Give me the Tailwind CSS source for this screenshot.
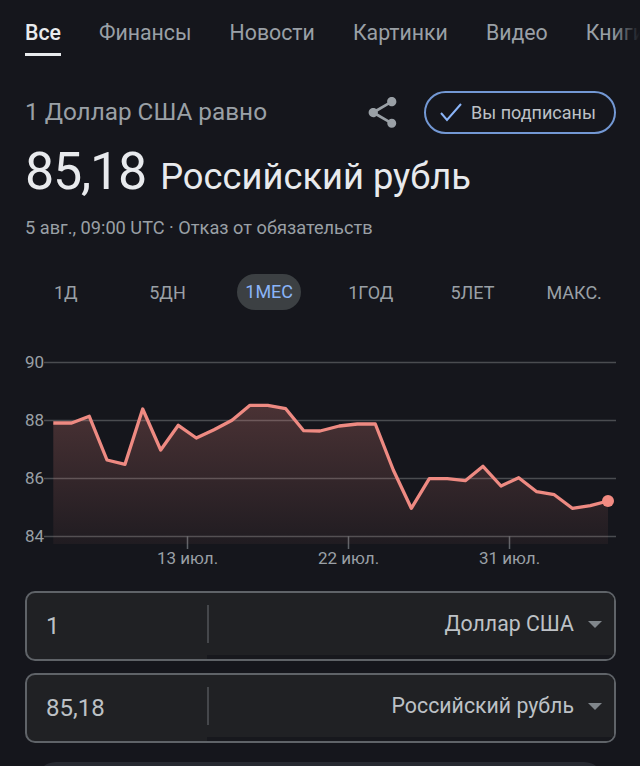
<!DOCTYPE html>
<html lang="ru">
<head>
  <meta charset="UTF-8" />
  <title>Доллар США к рублю</title>
  <script src="https://cdn.jsdelivr.net/npm/@tailwindcss/browser@4"></script>
</head>
<body class="bg-[#15161c] font-['Roboto',sans-serif] w-[640px] h-[766px] overflow-hidden">
  <!-- tabs -->
  <nav class="relative flex gap-[38px] pl-[25px] pt-[20px] h-[57px] text-[21.3px] leading-[26px] whitespace-nowrap overflow-hidden text-[#9aa0a6]">
    <a class="h-[36px] border-b-[3px] border-[#e8eaed] text-[#e8eaed] font-medium">Все</a>
    <a>Финансы</a>
    <a>Новости</a>
    <a>Картинки</a>
    <a>Видео</a>
    <a>Книги</a>
    <div class="absolute right-0 top-0 w-[28px] h-full bg-linear-to-l from-[#15161c] to-transparent"></div>
  </nav>

  <!-- header -->
  <div class="flex items-center pl-[25px] pr-[24px] pt-[24px] h-[86px]">
    <div class="flex-1 text-[24.3px] leading-[32px] text-[#9aa0a6]">1 Доллар США равно</div>
    <svg class="w-[37px] h-[37px] mr-[23px] text-[#9aa0a6]" viewBox="0 0 24 24" fill="currentColor"><path d="M18 16.08c-.76 0-1.44.3-1.96.77L8.91 12.7c.05-.23.09-.46.09-.7s-.04-.47-.09-.7l7.05-4.11c.54.5 1.25.81 2.04.81 1.66 0 3-1.34 3-3s-1.34-3-3-3-3 1.34-3 3c0 .24.04.47.09.7L8.04 9.81C7.5 9.31 6.79 9 6 9c-1.66 0-3 1.34-3 3s1.34 3 3 3c.79 0 1.5-.31 2.04-.81l7.12 4.16c-.05.21-.08.43-.08.65 0 1.61 1.31 2.92 2.92 2.92s2.92-1.31 2.92-2.92-1.31-2.92-2.92-2.92z"/></svg>
    <div class="flex items-center w-[192px] h-[43px] rounded-full border-2 border-[#7398d4] pl-[14px] text-[#bdc1c6] text-[18px]">
      <svg class="w-[22px] h-[22px] mr-[9px] text-[#8ab4f8]" viewBox="0 0 22 22" fill="none" stroke="currentColor" stroke-width="2"><path d="M1 12L7 19L21 3"/></svg>
      Вы подписаны
    </div>
  </div>

  <!-- rate -->
  <div class="flex items-baseline pl-[25px] h-[57px] text-[#e8eaed]">
    <span class="text-[52px] leading-[57px] tracking-[-1.2px]">85,18</span>
    <span class="text-[36.3px] ml-[14px]">Российский рубль</span>
  </div>
  <div class="pl-[25px] pt-[16px] h-[44px] text-[18.2px] leading-[24px] text-[#9aa0a6]">5 авг., 09:00 UTC · Отказ от обязательств</div>

  <!-- ranges -->
  <div class="grid grid-cols-6 w-[610px] ml-[15px] h-[36px] mt-[30px] items-center text-center text-[18px] text-[#9aa0a6]">
    <span>1Д</span>
    <span>5ДН</span>
    <span class="justify-self-center w-[64px] h-[36px] leading-[36px] rounded-full bg-[#3c4043] text-[#8ab4f8]">1МЕС</span>
    <span>1ГОД</span>
    <span>5ЛЕТ</span>
    <span>МАКС.</span>
  </div>

  <!-- chart -->
  <svg class="block mt-[34px] w-[640px] h-[250px] font-['Roboto',sans-serif]" viewBox="0 344 640 250">
    <defs>
      <linearGradient id="area" x1="0" y1="405" x2="0" y2="544" gradientUnits="userSpaceOnUse">
        <stop offset="0" stop-color="#f28b82" stop-opacity=".24" />
        <stop offset="1" stop-color="#f28b82" stop-opacity=".05" />
      </linearGradient>
    </defs>
    <g stroke="#4a4c50" stroke-width="1.5">
      <path d="M44 362.5H616M44 420.5H616M44 478.5H616M44 536.5H616" />
      <path stroke="#5f6368" d="M187.5 536V549M348.5 536V549M509.5 536V549" />
    </g>
    <path fill="url(#area)" d="M53.3 423L71.7 423L89.3 416.3L107 460L125 464.3L142.7 409L160.7 450L178.3 425.3L196.3 438L214 429.7L232 420.3L250 405.3L267.7 405.3L285.7 408.7L303.7 430.7L320 431L339.3 426L357.3 424L375.3 424L393.3 470L411.3 508.3L429.3 478.7L447.3 478.7L465.3 480.7L483 466.3L501 486L518.7 477.7L536.7 491.7L554.3 494.7L572.3 508.3L590.3 505.7L608 501V544H53.3Z" />
    <path fill="none" stroke="#ee8a82" stroke-width="3.3" stroke-linejoin="round" d="M53.3 423L71.7 423L89.3 416.3L107 460L125 464.3L142.7 409L160.7 450L178.3 425.3L196.3 438L214 429.7L232 420.3L250 405.3L267.7 405.3L285.7 408.7L303.7 430.7L320 431L339.3 426L357.3 424L375.3 424L393.3 470L411.3 508.3L429.3 478.7L447.3 478.7L465.3 480.7L483 466.3L501 486L518.7 477.7L536.7 491.7L554.3 494.7L572.3 508.3L590.3 505.7L608 501" />
    <circle cx="608" cy="501" r="6" fill="#f28b82" />
    <g fill="#9aa0a6" font-size="17">
      <text x="25" y="368">90</text>
      <text x="25" y="426">88</text>
      <text x="25" y="484">86</text>
      <text x="25" y="542">84</text>
      <text x="187.5" y="564" text-anchor="middle">13 июл.</text>
      <text x="348.5" y="564" text-anchor="middle">22 июл.</text>
      <text x="509.5" y="564" text-anchor="middle">31 июл.</text>
    </g>
  </svg>

  <!-- converter -->
  <div class="flex flex-col gap-[12px] ml-[25px] w-[591px] mt-[-3px]">
    <div class="flex h-[70px] rounded-[10px] border-2 border-[#5f6368] bg-[#202124] overflow-hidden">
      <div class="flex items-center w-[180px] pl-[19px] text-[24px] text-[#bdc1c6]">1</div>
      <div class="flex flex-1 items-center justify-end h-[62px] pr-[12px] bg-[#202124] shadow-[0_4px_0_#17181d]">
        <div class="w-[2px] h-[38px] bg-[#45474b] mr-auto"></div>
        <span class="text-[21.3px] text-[#bdc1c6] mr-[14px]">Доллар США</span>
        <span class="w-0 h-0 border-x-[7.5px] border-x-transparent border-t-[7px] border-t-[#80868b]"></span>
      </div>
    </div>
    <div class="flex h-[70px] rounded-[10px] border-2 border-[#5f6368] bg-[#202124] overflow-hidden">
      <div class="flex items-center w-[180px] pl-[19px] text-[24px] text-[#bdc1c6]">85,18</div>
      <div class="flex flex-1 items-center justify-end h-[62px] pr-[12px] bg-[#202124] shadow-[0_4px_0_#17181d]">
        <div class="w-[2px] h-[38px] bg-[#45474b] mr-auto"></div>
        <span class="text-[21.3px] text-[#bdc1c6] mr-[14px]">Российский рубль</span>
        <span class="w-0 h-0 border-x-[7.5px] border-x-transparent border-t-[7px] border-t-[#80868b]"></span>
      </div>
    </div>
  </div>
  <div class="mx-[36px] mt-[19px] h-[20px] rounded-t-[24px] bg-[#272a31]"></div>
</body>
</html>
